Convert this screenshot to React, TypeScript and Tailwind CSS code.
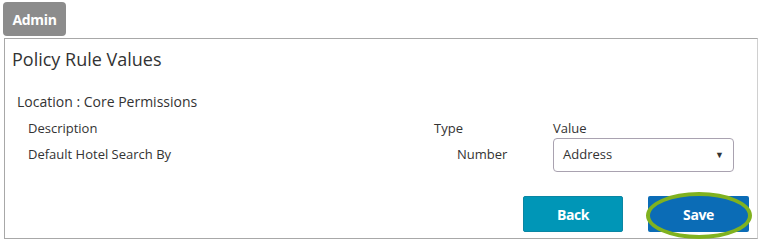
import React from "react";

export default function App() {
  return (
    <div
      className="w-[758px] h-[244px] bg-white text-[#333] overflow-hidden"
      style={{ fontFamily: '"Open Sans", "Liberation Sans", sans-serif' }}
    >
      <div className="pt-[2px] pl-[3px]">
        <div className="w-[63px] h-[34px] bg-[#8c8c8c] rounded-[4px] flex items-center justify-center text-white font-bold text-[14px] tracking-[-0.3px]">
          Admin
        </div>
      </div>
      <div className="mt-[2px] ml-[4px] w-[754px] h-[201px] border border-[#a8a8a8] border-r-[#d0d0d0] flex flex-col">
        <div className="pl-[7px] pt-[8px] text-[18px] leading-[24px] text-[#333]">Policy Rule Values</div>
        <div className="pl-[12px] pt-[21px] text-[14px] leading-[20px]">Location : Core Permissions</div>
        <div className="pl-[23px] pt-[7px] grid grid-cols-[406px_119px_181px] text-[13px]">
          <div className="leading-[18px]">Description</div>
          <div className="leading-[18px]">Type</div>
          <div className="leading-[18px]">Value</div>
          <div className="flex items-center h-[34px] mt-[1px]">Default Hotel Search By</div>
          <div className="flex items-center h-[34px] mt-[1px] pl-[23px]">Number</div>
          <div className="mt-[1px] h-[34px] border border-[#a9a2b0] rounded-[4px] flex items-center justify-between pl-[9px] pr-[9px] text-[13px]">
            <span>Address</span>
            <span className="text-[9px] text-[#333]">▼</span>
          </div>
        </div>
        <div className="flex justify-end gap-[25px] pr-[8px] pt-[24px]">
          <div className="w-[100px] h-[36px] bg-[#0096b7] border border-[#0a86a3] rounded-[2px] flex items-center justify-center text-white font-bold text-[14px] tracking-[-0.4px]">
            Back
          </div>
          <div className="relative w-[101px] h-[36px] bg-[#0b6cb6] rounded-[2px] flex items-center justify-center text-white font-bold text-[14px] tracking-[-0.4px]">
            Save
            <div className="absolute left-[-2px] top-[-4px] w-[106px] h-[47px] rounded-[50%] border-[4px] border-[#80b21f]" />
          </div>
        </div>
      </div>
    </div>
  );
}
